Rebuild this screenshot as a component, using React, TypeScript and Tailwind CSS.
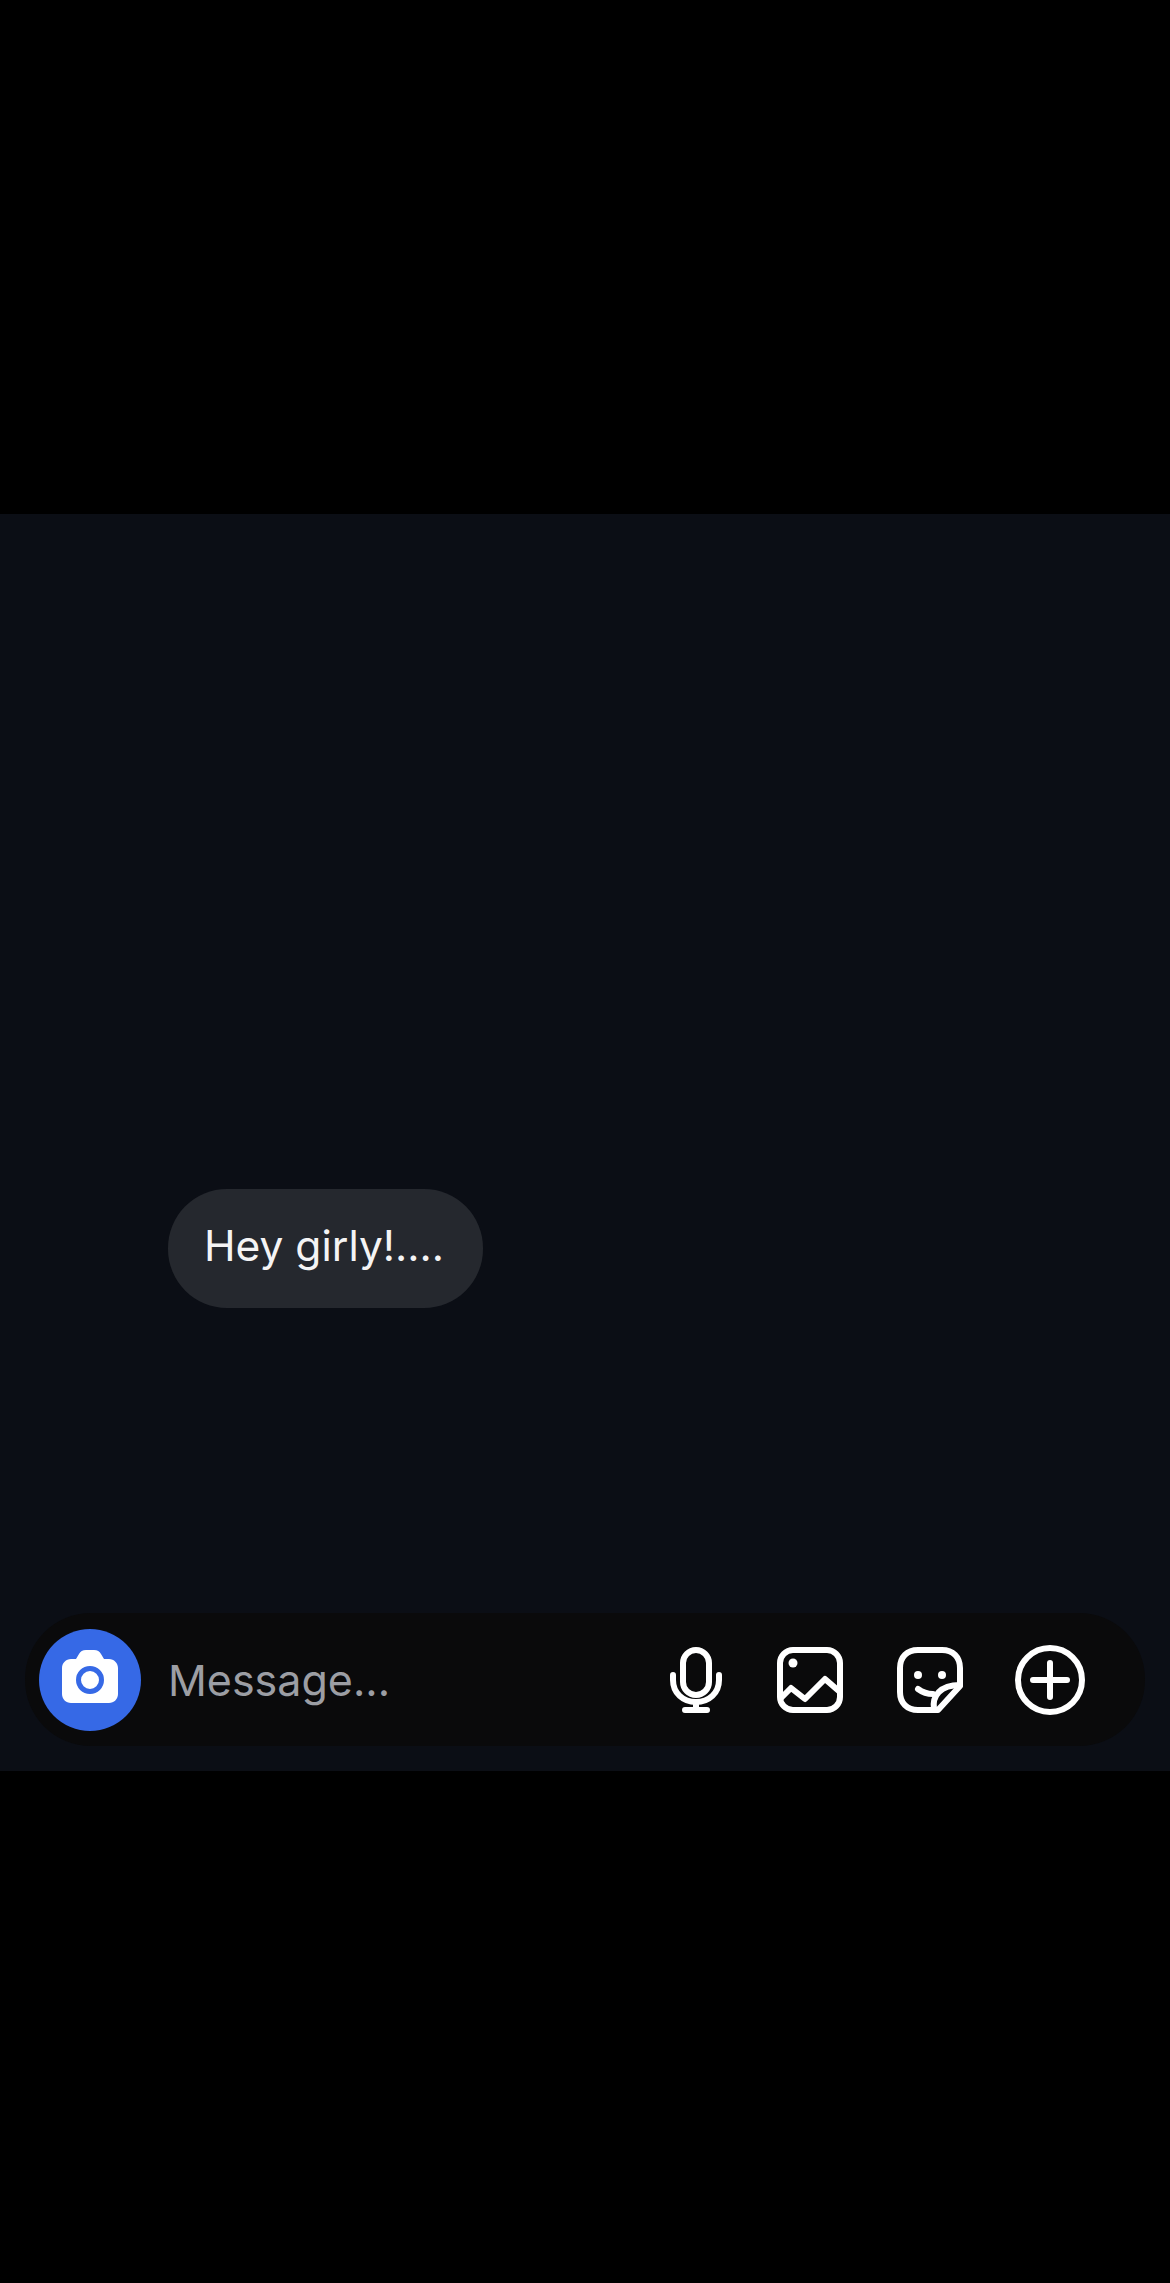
export default function App() {
  return (
    <div className="h-[2283px] w-[1170px] bg-black flex flex-col font-['Inter',sans-serif]">
      {/* top letterbox */}
      <div className="h-[514px] shrink-0" />

      {/* Chat panel */}
      <div className="h-[1257px] shrink-0 bg-[#0b0e15] flex flex-col">
        <div className="flex-1 pt-[675px] pl-[168px]">
          <div className="w-[315px] h-[119px] rounded-[59px] bg-[#25282e] flex items-center pl-[36px] pb-[6px] text-[42.5px] text-[#f4f4f5]">
            Hey girly!....
          </div>
        </div>

        {/* Message bar */}
        <div className="mx-[25px] mb-[25px] h-[133px] rounded-[66px] bg-[#0a0a0b] flex items-center pl-[14px]">
          <div className="w-[102px] h-[102px] rounded-full bg-[#3669e6] flex items-center justify-center">
            <svg width="56" height="60" viewBox="0 0 56 60">
              <path fill="#fff" d="M9 9h5l3-5c1.500-2.500 3.500-4 7-4h8c3.500 0 5.500 1.500 7 4l3 5h5c5 0 9 4 9 9v26c0 5-4 9-9 9H9c-5 0-9-4-9-9V18c0-5 4-9 9-9z" />
              <circle cx="28" cy="30" r="11.500" fill="none" stroke="#3669e6" strokeWidth="5" />
            </svg>
          </div>
          <div className="ml-[27px] pt-[2px] text-[43px] text-[#9c9ea4]">Message...</div>

          <div className="ml-auto flex items-center pr-[60px]">
            {/* mic */}
            <svg width="52" height="66" viewBox="0 0 52 66" fill="none" stroke="#fff" strokeWidth="6" strokeLinecap="round" strokeLinejoin="round">
              <rect x="13" y="3" width="26" height="45" rx="13" />
              <path d="M3 28v5c0 13 10 22 23 22s23-9 23-22v-5" />
              <path d="M26 55v8M15 63h22" />
            </svg>
            {/* gallery */}
            <svg className="ml-[55px]" width="66" height="66" viewBox="0 0 66 66" fill="none" stroke="#fff" strokeWidth="6" strokeLinecap="round" strokeLinejoin="round">
              <rect x="3" y="3" width="60" height="60" rx="13" />
              <circle cx="16" cy="16" r="4.500" fill="#fff" stroke="none" />
              <path d="M4 51l10-10 14 11 20-20 15 13" />
            </svg>
            {/* sticker */}
            <svg className="ml-[54px]" width="66" height="66" viewBox="0 0 66 66" fill="none" stroke="#fff" strokeWidth="6" strokeLinecap="round" strokeLinejoin="round">
              <path d="M41 63H21C10 63 3 56 3 45V21C3 10 10 3 21 3h24c11 0 18 7 18 18v18z" />
              <circle cx="21" cy="28" r="4" fill="#fff" stroke="none" />
              <circle cx="45" cy="28" r="4" fill="#fff" stroke="none" />
              <path d="M21 42c4 3 9 5 15 5" />
              <path d="M37 62c-2-13 6-24 26-24" />
            </svg>
            {/* plus */}
            <svg className="ml-[52px]" width="70" height="70" viewBox="0 0 70 70" fill="none" stroke="#fff" strokeWidth="6" strokeLinecap="round">
              <circle cx="35" cy="35" r="32" />
              <path d="M35 18v34M18 35h34" />
            </svg>
          </div>
        </div>
      </div>
    </div>
  )
}
